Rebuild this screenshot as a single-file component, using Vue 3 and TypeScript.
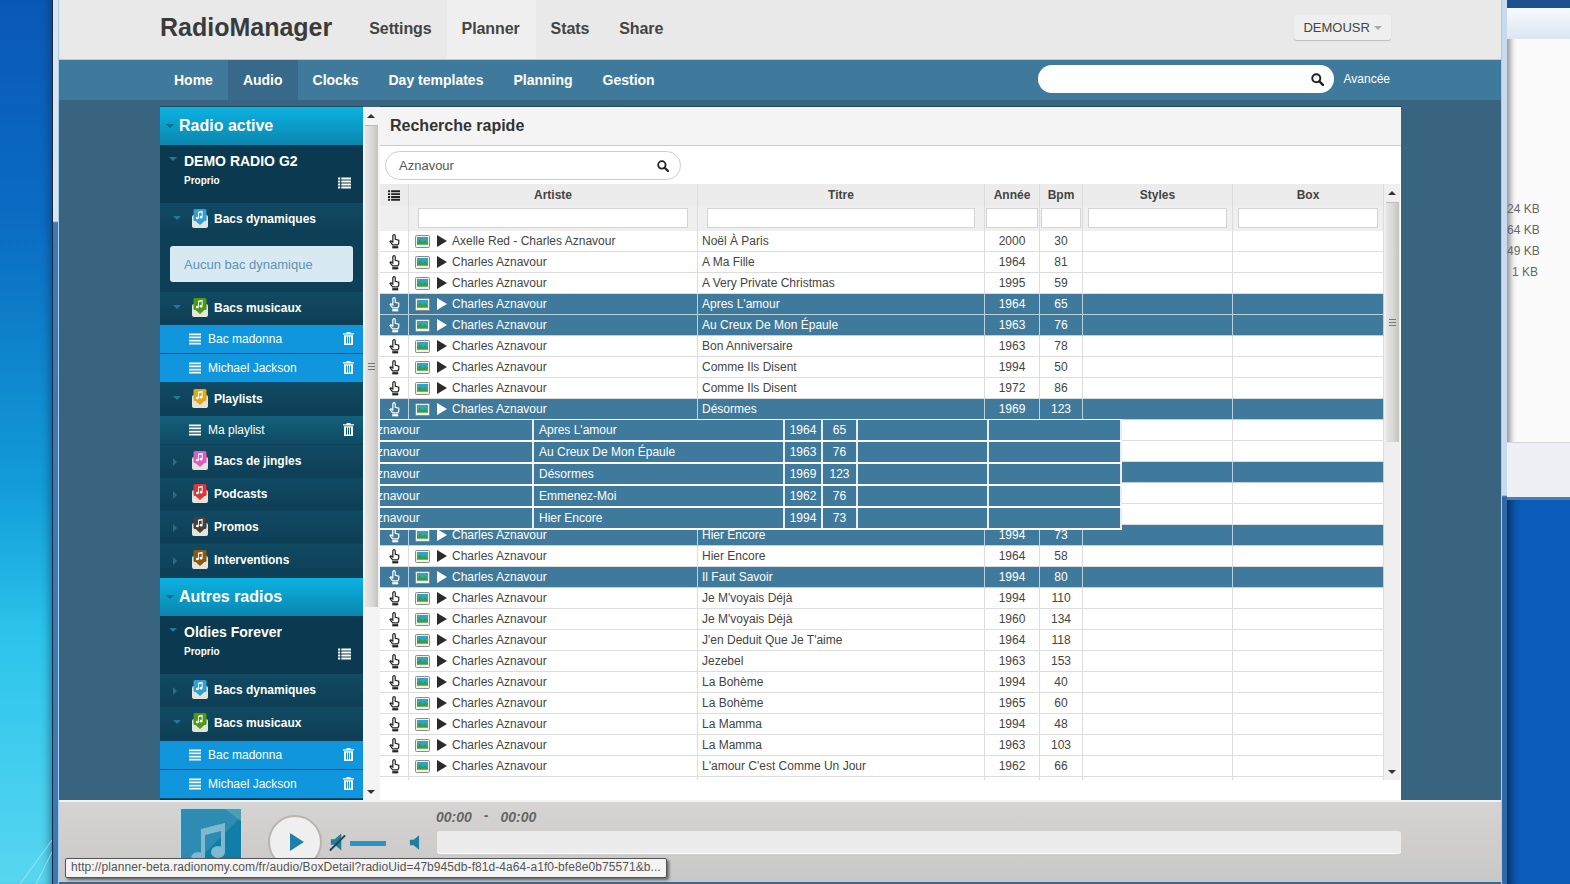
<script setup lang="ts">
interface Track {
  artist: string;
  title: string;
  year: string;
  bpm: string;
  sel?: boolean;
}

const ca = "Charles Aznavour";
const blank: Track = { artist: "", title: "", year: "", bpm: "" };
const tracks: Track[] = [
  { artist: "Axelle Red - Charles Aznavour", title: "Noël À Paris", year: "2000", bpm: "30" },
  { artist: ca, title: "A Ma Fille", year: "1964", bpm: "81" },
  { artist: ca, title: "A Very Private Christmas", year: "1995", bpm: "59" },
  { artist: ca, title: "Apres L'amour", year: "1964", bpm: "65", sel: true },
  { artist: ca, title: "Au Creux De Mon Épaule", year: "1963", bpm: "76", sel: true },
  { artist: ca, title: "Bon Anniversaire", year: "1963", bpm: "78" },
  { artist: ca, title: "Comme Ils Disent", year: "1994", bpm: "50" },
  { artist: ca, title: "Comme Ils Disent", year: "1972", bpm: "86" },
  { artist: ca, title: "Désormes", year: "1969", bpm: "123", sel: true },
  // these five sit under the drag ghost
  blank,
  blank,
  { ...blank, sel: true },
  blank,
  blank,
  { artist: ca, title: "Hier Encore", year: "1994", bpm: "73", sel: true },
  { artist: ca, title: "Hier Encore", year: "1964", bpm: "58" },
  { artist: ca, title: "Il Faut Savoir", year: "1994", bpm: "80", sel: true },
  { artist: ca, title: "Je M'voyais Déjà", year: "1994", bpm: "110" },
  { artist: ca, title: "Je M'voyais Déjà", year: "1960", bpm: "134" },
  { artist: ca, title: "J'en Deduit Que Je T'aime", year: "1964", bpm: "118" },
  { artist: ca, title: "Jezebel", year: "1963", bpm: "153" },
  { artist: ca, title: "La Bohème", year: "1994", bpm: "40" },
  { artist: ca, title: "La Bohème", year: "1965", bpm: "60" },
  { artist: ca, title: "La Mamma", year: "1994", bpm: "48" },
  { artist: ca, title: "La Mamma", year: "1963", bpm: "103" },
  { artist: ca, title: "L'amour C'est Comme Un Jour", year: "1962", bpm: "66" },
];

const dragged = [
  { title: "Apres L'amour", year: "1964", bpm: "65" },
  { title: "Au Creux De Mon Épaule", year: "1963", bpm: "76" },
  { title: "Désormes", year: "1969", bpm: "123" },
  { title: "Emmenez-Moi", year: "1962", bpm: "76" },
  { title: "Hier Encore", year: "1994", bpm: "73" },
];

type Side =
  | { kind: "section"; label: string; extra?: string }
  | { kind: "radio"; label: string }
  | { kind: "folder"; label: string; color: string; open?: boolean }
  | { kind: "alert"; label: string }
  | { kind: "item"; label: string; dark?: boolean; low?: boolean };

const side: Side[] = [
  { kind: "section", label: "Radio active" },
  { kind: "radio", label: "DEMO RADIO G2" },
  { kind: "folder", label: "Bacs dynamiques", color: "#2f9fd4", open: true },
  { kind: "alert", label: "Aucun bac dynamique" },
  { kind: "folder", label: "Bacs musicaux", color: "#4c9a12", open: true },
  { kind: "item", label: "Bac madonna" },
  { kind: "item", label: "Michael Jackson" },
  { kind: "folder", label: "Playlists", color: "#e2a816", open: true },
  { kind: "item", label: "Ma playlist", dark: true },
  { kind: "folder", label: "Bacs de jingles", color: "#dd5cc4" },
  { kind: "folder", label: "Podcasts", color: "#dd3535" },
  { kind: "folder", label: "Promos", color: "#4a4038" },
  { kind: "folder", label: "Interventions", color: "#8a5a12" },
  { kind: "section", label: "Autres radios", extra: "second" },
  { kind: "radio", label: "Oldies Forever" },
  { kind: "folder", label: "Bacs dynamiques", color: "#2f9fd4" },
  { kind: "folder", label: "Bacs musicaux", color: "#4c9a12", open: true },
  { kind: "item", label: "Bac madonna", low: true },
  { kind: "item", label: "Michael Jackson" },
];

const topLinks = ["Settings", "Planner", "Stats", "Share"];
const navLinks = ["Home", "Audio", "Clocks", "Day templates", "Planning", "Gestion"];
const headers = [
  { label: "Artiste", pad: "pad-l" },
  { label: "Titre", pad: "pad-l" },
  { label: "Année", pad: "pad-s" },
  { label: "Bpm", pad: "pad-s" },
  { label: "Styles", pad: "pad-m" },
  { label: "Box", pad: "pad-m" },
];
</script>

<template>
  <div class="desktop">
    <svg class="defs" width="0" height="0">
      <symbol id="hand" viewBox="0 0 14 16">
        <path d="M5.2 2a1.3 1.3 0 0 1 2.6 0v3.6l3.8 1v3l-1 2H5L2.2 8.2l1-.9 2 1.4z" fill="none" stroke="currentColor" stroke-width="1.3" />
        <rect x="4.6" y="13" width="6.4" height="2.4" fill="currentColor" />
      </symbol>
      <symbol id="pic" viewBox="0 0 15 13">
        <rect x=".5" y=".5" width="14" height="12" rx="1" fill="#f2efe6" stroke="#8c8c80" />
        <rect x="2" y="2" width="11" height="7.5" fill="#2ba6c8" />
        <path d="M2 9.5V7l3-2.5 3 2.5 2-2 3 3v1.500z" fill="#3f9a45" />
      </symbol>
      <symbol id="bullets" viewBox="0 0 14 12">
        <path d="M0 0h2.400v2.200H0zM3.600 0H14v2.200H3.600zM0 3.300h2.400v2.200H0zM3.600 3.300H14v2.200H3.600zM0 6.600h2.400v2.200H0zM3.600 6.600H14v2.200H3.600zM0 9.800h2.400V12H0zM3.600 9.800H14V12H3.600z" fill="currentColor" />
      </symbol>
      <symbol id="lines" viewBox="0 0 13 12">
        <path d="M0 0h13v2H0zM0 3.300h13v2H0zM0 6.700h13v2H0zM0 10h13v2H0z" fill="currentColor" />
      </symbol>
      <symbol id="trash" viewBox="0 0 11 13">
        <path d="M3.800 0h3.400l.6 1.200H11v1.300H0V1.200h3.200zM1 3.300h9V13H1zM3 4.600v7h1v-7zm2 0v7h1v-7zm2 0v7h1v-7z" fill="currentColor" fill-rule="evenodd" />
      </symbol>
      <symbol id="lens" viewBox="0 0 13 13">
        <circle cx="5.300" cy="5.300" r="4" fill="none" stroke="currentColor" stroke-width="2" />
        <path d="M8.300 8.300l3.600 3.600" stroke="currentColor" stroke-width="2.400" stroke-linecap="round" />
      </symbol>
    </svg>

    <div class="wall">
      <svg class="streak" viewBox="0 0 52 50" width="52" height="50">
        <path d="M52 6L20 50M52 18L36 50" stroke="#bff0fa" stroke-width="1.200" opacity=".5" fill="none" />
      </svg>
    </div>

    <div class="frame frame-left"></div>

    <div class="app">
      <header class="topbar">
        <div class="brand">RadioManager</div>
        <a v-for="l in topLinks" :key="l" :class="['toplink', { on: l === 'Planner' }]">{{ l }}</a>
        <button class="userbtn">DEMOUSR <i class="caret"></i></button>
      </header>

      <nav class="navbar">
        <a v-for="l in navLinks" :key="l" :class="['navlink', { on: l === 'Audio' }]">{{ l }}</a>
        <div class="navsearch">
          <svg class="navlens"><use href="#lens" /></svg>
        </div>
        <a class="advanced">Avancée</a>
      </nav>

      <main class="main">
        <aside class="sidebar">
          <template v-for="(s, i) in side" :key="i">
            <div v-if="s.kind === 'section'" :class="['section', s.extra]">
              <i class="tri-down sec-tri"></i>{{ s.label }}
            </div>
            <div v-else-if="s.kind === 'radio'" class="radio">
              <i class="tri-down radio-tri"></i>
              <div class="radio-name">{{ s.label }}</div>
              <div class="radio-role">Proprio</div>
              <svg class="radio-list"><use href="#bullets" /></svg>
            </div>
            <div v-else-if="s.kind === 'folder'" class="folder">
              <i :class="s.open ? 'tri-down folder-tri' : 'tri-right folder-tri'"></i>
              <svg class="box" viewBox="0 0 16 19">
                <rect x="0" y="6" width="16" height="13" rx="2" fill="#e4e4dc" />
                <rect x="1.500" y="0" width="13" height="12" rx="1.500" :fill="s.color" />
                <path d="M3 11.500h10l-5 4.500z" :fill="s.color" />
                <path d="M6 2.800l4.600-1v6.400a1.500 1.300 0 1 1-.9-1.200V3.400L6.900 4v5a1.500 1.300 0 1 1-.9-1.200z" fill="#fff" />
              </svg>
              <span>{{ s.label }}</span>
            </div>
            <div v-else-if="s.kind === 'alert'" class="alert-wrap">
              <div class="alert">{{ s.label }}</div>
            </div>
            <div v-else :class="['item', { dark: s.dark, low: s.low }]">
              <svg class="item-lines"><use href="#lines" /></svg>
              <span>{{ s.label }}</span>
              <svg class="item-trash"><use href="#trash" /></svg>
            </div>
          </template>
        </aside>

        <div class="vscroll side-scroll">
          <i class="arrow-up"></i>
          <div class="thumb side-thumb"><span class="grip"></span></div>
          <i class="arrow-down"></i>
        </div>

        <section class="panel">
          <h2 class="panel-title">Recherche rapide</h2>
          <div class="searchrow">
            <div class="pill">
              <span>Aznavour</span>
              <svg class="pill-lens"><use href="#lens" /></svg>
            </div>
          </div>

          <div class="tablewrap">
            <div class="table">
              <div class="grid head">
                <div class="cell-h"><svg class="head-list"><use href="#bullets" /></svg></div>
                <div v-for="h in headers" :key="h.label" class="cell-h">{{ h.label }}</div>
              </div>
              <div class="grid filters">
                <div class="cell-f"></div>
                <div v-for="h in headers" :key="h.label" :class="['cell-f', h.pad]">
                  <input class="filter" type="text" />
                </div>
              </div>
              <div v-for="(t, i) in tracks" :key="i" :class="['grid', 'row', { sel: t.sel }]">
                <div class="cell action"><svg class="hand"><use href="#hand" /></svg></div>
                <div class="cell artist">
                  <svg class="pic"><use href="#pic" /></svg>
                  <i class="play"></i>
                  <span>{{ t.artist }}</span>
                </div>
                <div class="cell title">{{ t.title }}</div>
                <div class="cell num">{{ t.year }}</div>
                <div class="cell num">{{ t.bpm }}</div>
                <div class="cell"></div>
                <div class="cell"></div>
              </div>
              <div class="grid row"><div class="cell"></div><div class="cell"></div><div class="cell"></div><div class="cell"></div><div class="cell"></div><div class="cell"></div><div class="cell"></div></div>
            </div>
            <div class="vscroll table-scroll">
              <i class="arrow-up"></i>
              <div class="thumb table-thumb"><span class="grip"></span></div>
              <i class="arrow-down"></i>
            </div>
          </div>

          <div class="dragghost">
            <div v-for="d in dragged" :key="d.title" class="ghost-row">
              <div class="ghost-cell"><span class="ghost-artist">Charles Aznavour</span></div>
              <div class="ghost-cell">{{ d.title }}</div>
              <div class="ghost-cell ghost-num">{{ d.year }}</div>
              <div class="ghost-cell ghost-num">{{ d.bpm }}</div>
              <div class="ghost-cell"></div>
              <div class="ghost-cell"></div>
            </div>
          </div>
        </section>
      </main>

      <footer class="player">
        <div class="cover">
          <svg viewBox="0 0 60 60" width="60" height="60">
            <rect width="60" height="60" fill="#2e8cb3" />
            <path d="M60 8v52H8z" fill="#0f7fa8" />
            <path d="M60 0H44L60 12z" fill="#4f9db0" />
            <path d="M20 20l24-6v29a7 6 0 1 1-4-5.400V22l-16 4v23a7 6 0 1 1-4-5.400z" fill="#7fb9d0" />
          </svg>
        </div>
        <button class="playbtn"><i class="playbtn-tri"></i></button>
        <svg class="mute" viewBox="0 0 18 20">
          <path d="M2 7h4l7-6v18l-7-6H2z" fill="#1f7f9f" />
          <path d="M1 19L17 3" stroke="#2b3f46" stroke-width="2" />
        </svg>
        <div class="volume"></div>
        <svg class="speaker" viewBox="0 0 12 18">
          <path d="M1 6h4l6-5v16l-6-5H1z" fill="#1f7f9f" />
        </svg>
        <div class="timeline">
          <div class="times"><span>00:00</span><span class="dash">-</span><span>00:00</span></div>
          <div class="progress"></div>
        </div>
      </footer>
    </div>

    <div class="frame frame-right"></div>

    <div class="other">
      <div class="explorer">
        <div class="ex-title"></div>
        <div class="ex-tool"></div>
        <div class="ex-list">
          <div>24 KB</div>
          <div>64 KB</div>
          <div>49 KB</div>
          <div>1 KB</div>
        </div>
        <div class="ex-foot"></div>
      </div>
    </div>

    <div class="tooltip">http://planner-beta.radionomy.com/fr/audio/BoxDetail?radioUid=47b945db-f81d-4a64-a1f0-bfe8e0b75571&amp;b...</div>
  </div>
</template>

<style>
html,
body {
  margin: 0;
  overflow: hidden;
}
</style>

<style scoped>
.desktop {
  position: relative;
  display: flex;
  width: 1570px;
  height: 884px;
  overflow: hidden;
  font-family: "Liberation Sans", Arial, sans-serif;
  color: #444;
}
.defs {
  position: absolute;
}
.wall {
  position: relative;
  width: 52px;
  background: linear-gradient(180deg, #0a58b6 0, #0b6cc2 25%, #129cd8 55%, #2cc4ec 72%, #58d6f0 100%);
  box-shadow: inset -8px 0 8px -6px rgba(10, 40, 80, 0.5);
}
.streak {
  position: absolute;
  left: 0;
  bottom: 0;
}
.frame {
  width: 7px;
  box-sizing: border-box;
  background: linear-gradient(180deg, #d8e6f4 0, #d8e6f4 25%, #3f79b4 25.2%, #3a78b8 100%);
}
.frame-left {
  border-left: 1px solid #1c2a3a;
  border-right: 1px solid #a8cdea;
}
.frame-right {
  width: 6px;
  border-left: 1px solid #a8cdea;
  background: linear-gradient(180deg, #c8daf0 0, #c8daf0 56%, #2f67a8 56.2%, #2f67a8 100%);
}
.app {
  width: 1442px;
  display: flex;
  flex-direction: column;
}

.topbar {
  height: 60px;
  display: flex;
  align-items: stretch;
  padding-left: 101px;
  box-sizing: border-box;
  background: #e9e9e9;
  border-bottom: 1px solid #c4c8ca;
}
.brand {
  font-size: 25px;
  font-weight: bold;
  color: #3b3b3b;
  line-height: 55px;
  margin-right: 22px;
}
.toplink {
  padding: 0 15px;
  font-size: 16px;
  font-weight: bold;
  letter-spacing: -0.1px;
  color: #444;
  line-height: 57px;
}
.toplink.on {
  padding-right: 16px;
  background: #efefef;
}
.userbtn {
  margin: 15px 110px 20px auto;
  width: 97px;
  height: 25px;
  padding: 0;
  border: 0;
  border-radius: 3px;
  background: #efefef;
  box-shadow: 0 1px 1px #bdbdbd;
  font: 13px "Liberation Sans", Arial, sans-serif;
  color: #444;
}
.caret {
  display: inline-block;
  border: 4px solid transparent;
  border-top-color: #aaa;
  border-bottom: 0;
  vertical-align: 2px;
}

.navbar {
  height: 40px;
  display: flex;
  align-items: center;
  padding-left: 100px;
  background: #3f7a9c;
}
.navlink {
  height: 40px;
  padding: 0 15px;
  font-size: 14px;
  font-weight: bold;
  line-height: 40px;
  color: #fff;
}
.navlink.on {
  background: #38688a;
}
.navsearch {
  position: relative;
  width: 296px;
  height: 28px;
  margin-left: auto;
  margin-top: -3px;
  border-radius: 14px;
  background: #fff;
}
.navlens {
  position: absolute;
  right: 10px;
  top: 8px;
  width: 13px;
  height: 13px;
  color: #222;
}
.advanced {
  margin: -3px 111px 0 10px;
  font-size: 12px;
  color: #fff;
}

.main {
  height: 700px;
  display: flex;
  padding: 7px 0 0 101px;
  box-sizing: border-box;
  background: #38647f;
}
.sidebar {
  width: 203px;
  overflow: hidden;
  background: #0d3f56;
  color: #fff;
  box-shadow: 0 -1px 0 #1d4a62;
}
.section {
  position: relative;
  height: 38px;
  padding-left: 19px;
  font-size: 16px;
  font-weight: bold;
  line-height: 37px;
  background: linear-gradient(180deg, #0cb2e2, #0a86ae);
}
.section.second {
  margin-top: 1px;
  line-height: 38px;
}
.tri-down {
  position: absolute;
  border: 4px solid transparent;
  border-top-color: #1c7a9c;
  border-bottom: 0;
}
.tri-right {
  position: absolute;
  border: 4px solid transparent;
  border-left-color: #2a6d86;
  border-right: 0;
}
.sec-tri {
  left: 6px;
  top: 17px;
  border-top-color: #0a6d92;
}
.radio {
  position: relative;
  height: 58px;
  padding-left: 24px;
  background: #0b3a50;
}
.radio-tri {
  left: 9px;
  top: 12px;
}
.radio-name {
  padding-top: 8px;
  font-size: 14px;
  font-weight: bold;
  line-height: 16px;
}
.radio-role {
  padding-top: 5px;
  font-size: 10px;
  font-weight: bold;
  line-height: 14px;
}
.radio-list {
  position: absolute;
  right: 12px;
  top: 32px;
  width: 13px;
  height: 12px;
  color: #fff;
}
.folder {
  position: relative;
  height: 33px;
  display: flex;
  align-items: center;
  padding: 0 0 1px 32px;
  box-sizing: border-box;
  font-size: 12px;
  font-weight: bold;
  background: linear-gradient(180deg, #114a63, #0d3f56);
  border-bottom: 1px solid #0e4259;
}
.folder-tri {
  left: 13px;
  top: 13px;
}
.box {
  width: 16px;
  height: 19px;
  margin-right: 6px;
}
.alert-wrap {
  height: 56px;
  padding: 10px 10px 0;
  box-sizing: border-box;
  background: #0d3f56;
}
.alert {
  height: 36px;
  padding-left: 14px;
  border-radius: 3px;
  background: #d9e9f3;
  color: #5f93aa;
  font-size: 13px;
  line-height: 37px;
}
.item {
  position: relative;
  height: 29px;
  display: flex;
  align-items: center;
  padding-left: 29px;
  box-sizing: border-box;
  font-size: 12px;
  background: #0f96dc;
  border-bottom: 1px solid #0c4f70;
}
.item.low {
  margin-top: 1px;
}
.item.dark {
  background: linear-gradient(180deg, #14607c, #0e4a63);
  border-bottom-color: #0d3f56;
}
.item-lines {
  width: 12px;
  height: 12px;
  margin-right: 7px;
  color: #fff;
}
.item-trash {
  position: absolute;
  right: 9px;
  top: 7px;
  width: 11px;
  height: 13px;
  color: #fff;
}

.vscroll {
  position: relative;
  width: 16px;
  background: #efefef;
  box-sizing: border-box;
}
.side-scroll {
  width: 17px;
  background: #f4f4f4;
}
.arrow-up,
.arrow-down {
  position: absolute;
  left: 4px;
  border: 4px solid transparent;
  border-top: 0;
  border-bottom: 4px solid #333;
}
.arrow-up {
  top: 7px;
}
.arrow-down {
  bottom: 6px;
  border-bottom: 0;
  border-top: 4px solid #333;
}
.thumb {
  position: absolute;
  left: 2px;
  width: 13px;
  box-sizing: border-box;
  display: flex;
  align-items: center;
  justify-content: center;
  background: linear-gradient(90deg, #e6e6e6, #d8d6d2 60%, #c4c2be);
  border-top: 1px solid #bbb;
}
.side-thumb {
  top: 18px;
  height: 482px;
}
.table-thumb {
  top: 18px;
  height: 240px;
}
.grip {
  width: 7px;
  height: 7px;
  background: repeating-linear-gradient(180deg, #777 0 1px, transparent 1px 3px);
}

.panel {
  position: relative;
  width: 1021px;
  background: #fff;
  box-shadow: 0 -1px 0 #1d4a62;
}
.panel-title {
  height: 39px;
  margin: 0;
  padding-left: 10px;
  box-sizing: border-box;
  background: #f4f4f4;
  border-bottom: 1px solid #ccc;
  font-size: 16px;
  font-weight: bold;
  line-height: 37px;
  color: #333;
}
.searchrow {
  height: 38px;
  padding: 5px 0 0 5px;
  box-sizing: border-box;
}
.pill {
  position: relative;
  width: 296px;
  height: 29px;
  padding-left: 13px;
  box-sizing: border-box;
  border: 1px solid #ccc;
  border-radius: 15px;
  font-size: 13px;
  line-height: 27px;
  color: #555;
}
.pill-lens {
  position: absolute;
  right: 11px;
  top: 8px;
  width: 12px;
  height: 12px;
  color: #222;
}
.tablewrap {
  display: flex;
  height: 596px;
}
.table {
  width: 1004px;
  overflow: hidden;
}
.table-scroll {
  width: 16px;
}
.grid {
  display: grid;
  grid-template-columns: 29px 289px 287px 55px 43px 150px 151px;
}
.head {
  height: 22px;
  background: #ececec;
}
.cell-h {
  display: flex;
  align-items: center;
  justify-content: center;
  box-sizing: border-box;
  border-right: 1px solid #ddd;
  font-size: 12px;
  font-weight: bold;
  color: #444;
}
.head-list {
  width: 12px;
  height: 11px;
  color: #222;
}
.filters {
  height: 25px;
  background: #efefef;
}
.cell-f {
  box-sizing: border-box;
  border-right: 1px solid #ddd;
  padding-top: 2px;
}
.pad-l {
  padding-left: 9px;
  padding-right: 9px;
}
.pad-m {
  padding-left: 5px;
  padding-right: 5px;
}
.pad-s {
  padding-left: 1px;
  padding-right: 1px;
}
.filter {
  display: block;
  width: 100%;
  height: 20px;
  padding: 0;
  box-sizing: border-box;
  border: 1px solid #d4d4d4;
  background: #fff;
}
.row {
  height: 21px;
  background: #fff;
  font-size: 12px;
  color: #444;
}
.cell {
  box-sizing: border-box;
  border-right: 1px solid #ddd;
  border-bottom: 1px solid #ddd;
  line-height: 20px;
  white-space: nowrap;
  overflow: hidden;
}
.row.sel {
  background: #3f7a9c;
  color: #fff;
}
.row.sel .cell {
  border-color: #b9d2e0;
}
.action {
  display: flex;
  align-items: center;
  justify-content: center;
  color: #222;
}
.row.sel .action {
  color: #fff;
}
.hand {
  width: 13px;
  height: 15px;
}
.artist {
  display: flex;
  align-items: center;
  padding-left: 6px;
}
.pic {
  width: 15px;
  height: 13px;
  margin-right: 7px;
}
.play {
  width: 0;
  height: 0;
  margin-right: 5px;
  border-left: 10px solid #2b2b2b;
  border-top: 6px solid transparent;
  border-bottom: 6px solid transparent;
}
.row.sel .play {
  border-left-color: #fff;
}
.title {
  padding-left: 4px;
}
.num {
  text-align: center;
}

.dragghost {
  position: absolute;
  left: 0;
  top: 312px;
  width: 742px;
  background: #fff;
  padding-top: 1px;
}
.ghost-row {
  display: grid;
  grid-template-columns: 154px 251px 38px 35px 131px 133px;
  height: 22px;
  font-size: 12px;
  color: #fff;
}
.ghost-cell {
  position: relative;
  box-sizing: border-box;
  height: 20px;
  padding-left: 5px;
  background: #3f7a9c;
  border-right: 2px solid #e4eef4;
  line-height: 20px;
  white-space: nowrap;
  overflow: hidden;
}
.ghost-artist {
  position: absolute;
  left: -55px;
}
.ghost-num {
  padding-left: 0;
  text-align: center;
}

.player {
  flex: 1;
  display: flex;
  align-items: center;
  padding-left: 122px;
  overflow: hidden;
  border-top: 2px solid #f2f2f2;
  box-sizing: border-box;
  background: linear-gradient(180deg, #d6d4d2, #c8c8c8);
  border-bottom: 2px solid #3c6a88;
}
.cover {
  align-self: flex-start;
  width: 60px;
  height: 60px;
  margin-top: 7px;
  outline: 1px solid #b8dbe8;
}
.playbtn {
  width: 54px;
  height: 54px;
  margin: 0 7px 0 27px;
  padding: 0;
  display: flex;
  align-items: center;
  justify-content: center;
  border: 2px solid #b9b4ae;
  border-radius: 50%;
  background: #efefef;
}
.playbtn-tri {
  margin-left: 4px;
  border-left: 14px solid #1f7fa8;
  border-top: 9px solid transparent;
  border-bottom: 9px solid transparent;
}
.mute {
  width: 17px;
  height: 20px;
  margin-right: 4px;
}
.volume {
  width: 36px;
  height: 5px;
  margin-top: 3px;
  background: #2a93c4;
}
.speaker {
  width: 11px;
  height: 17px;
  margin: 0 17px 0 23px;
}
.timeline {
  align-self: flex-start;
  width: 964px;
  padding-top: 5px;
}
.times {
  height: 16px;
  margin: 0 0 8px -1px;
  font-size: 14px;
  font-weight: bold;
  font-style: italic;
  line-height: 16px;
  color: #666;
}
.dash {
  margin: 0 12px;
  font-style: normal;
  vertical-align: 2px;
}
.progress {
  height: 22px;
  border-radius: 3px;
  background: #ececec;
  box-shadow: 0 1px 0 #fff;
}

.other {
  width: 63px;
  background: #0a5cb8;
  box-shadow: inset 10px 0 8px -6px rgba(8, 25, 60, 0.7);
}
.explorer {
  height: 497px;
  display: flex;
  flex-direction: column;
  background: #fbfbfb;
  box-shadow: inset 8px 0 6px -5px rgba(60, 60, 60, 0.6);
  border-bottom: 3px solid #4f7db0;
  box-sizing: content-box;
}
.ex-title {
  height: 8px;
  background: #1d4f8c;
}
.ex-tool {
  height: 31px;
  background: linear-gradient(180deg, #f6fafd, #dbe6f2);
}
.ex-list {
  height: 404px;
  padding: 160px 32px 0 0;
  box-sizing: border-box;
  text-align: right;
  font-size: 12px;
  line-height: 21px;
  white-space: nowrap;
  color: #666;
  border-bottom: 1px solid #d4d4d4;
}
.ex-foot {
  flex: 1;
  background: #eef0f6;
}

.tooltip {
  position: absolute;
  left: 65px;
  top: 858px;
  width: 602px;
  height: 20px;
  padding-left: 5px;
  box-sizing: border-box;
  border: 1px solid #555;
  border-radius: 2px;
  background: #f4f4f4;
  box-shadow: 2px 2px 3px rgba(0, 0, 0, 0.5);
  font-size: 12px;
  letter-spacing: 0.07px;
  line-height: 17px;
  white-space: nowrap;
  overflow: hidden;
  color: #555;
}
</style>
